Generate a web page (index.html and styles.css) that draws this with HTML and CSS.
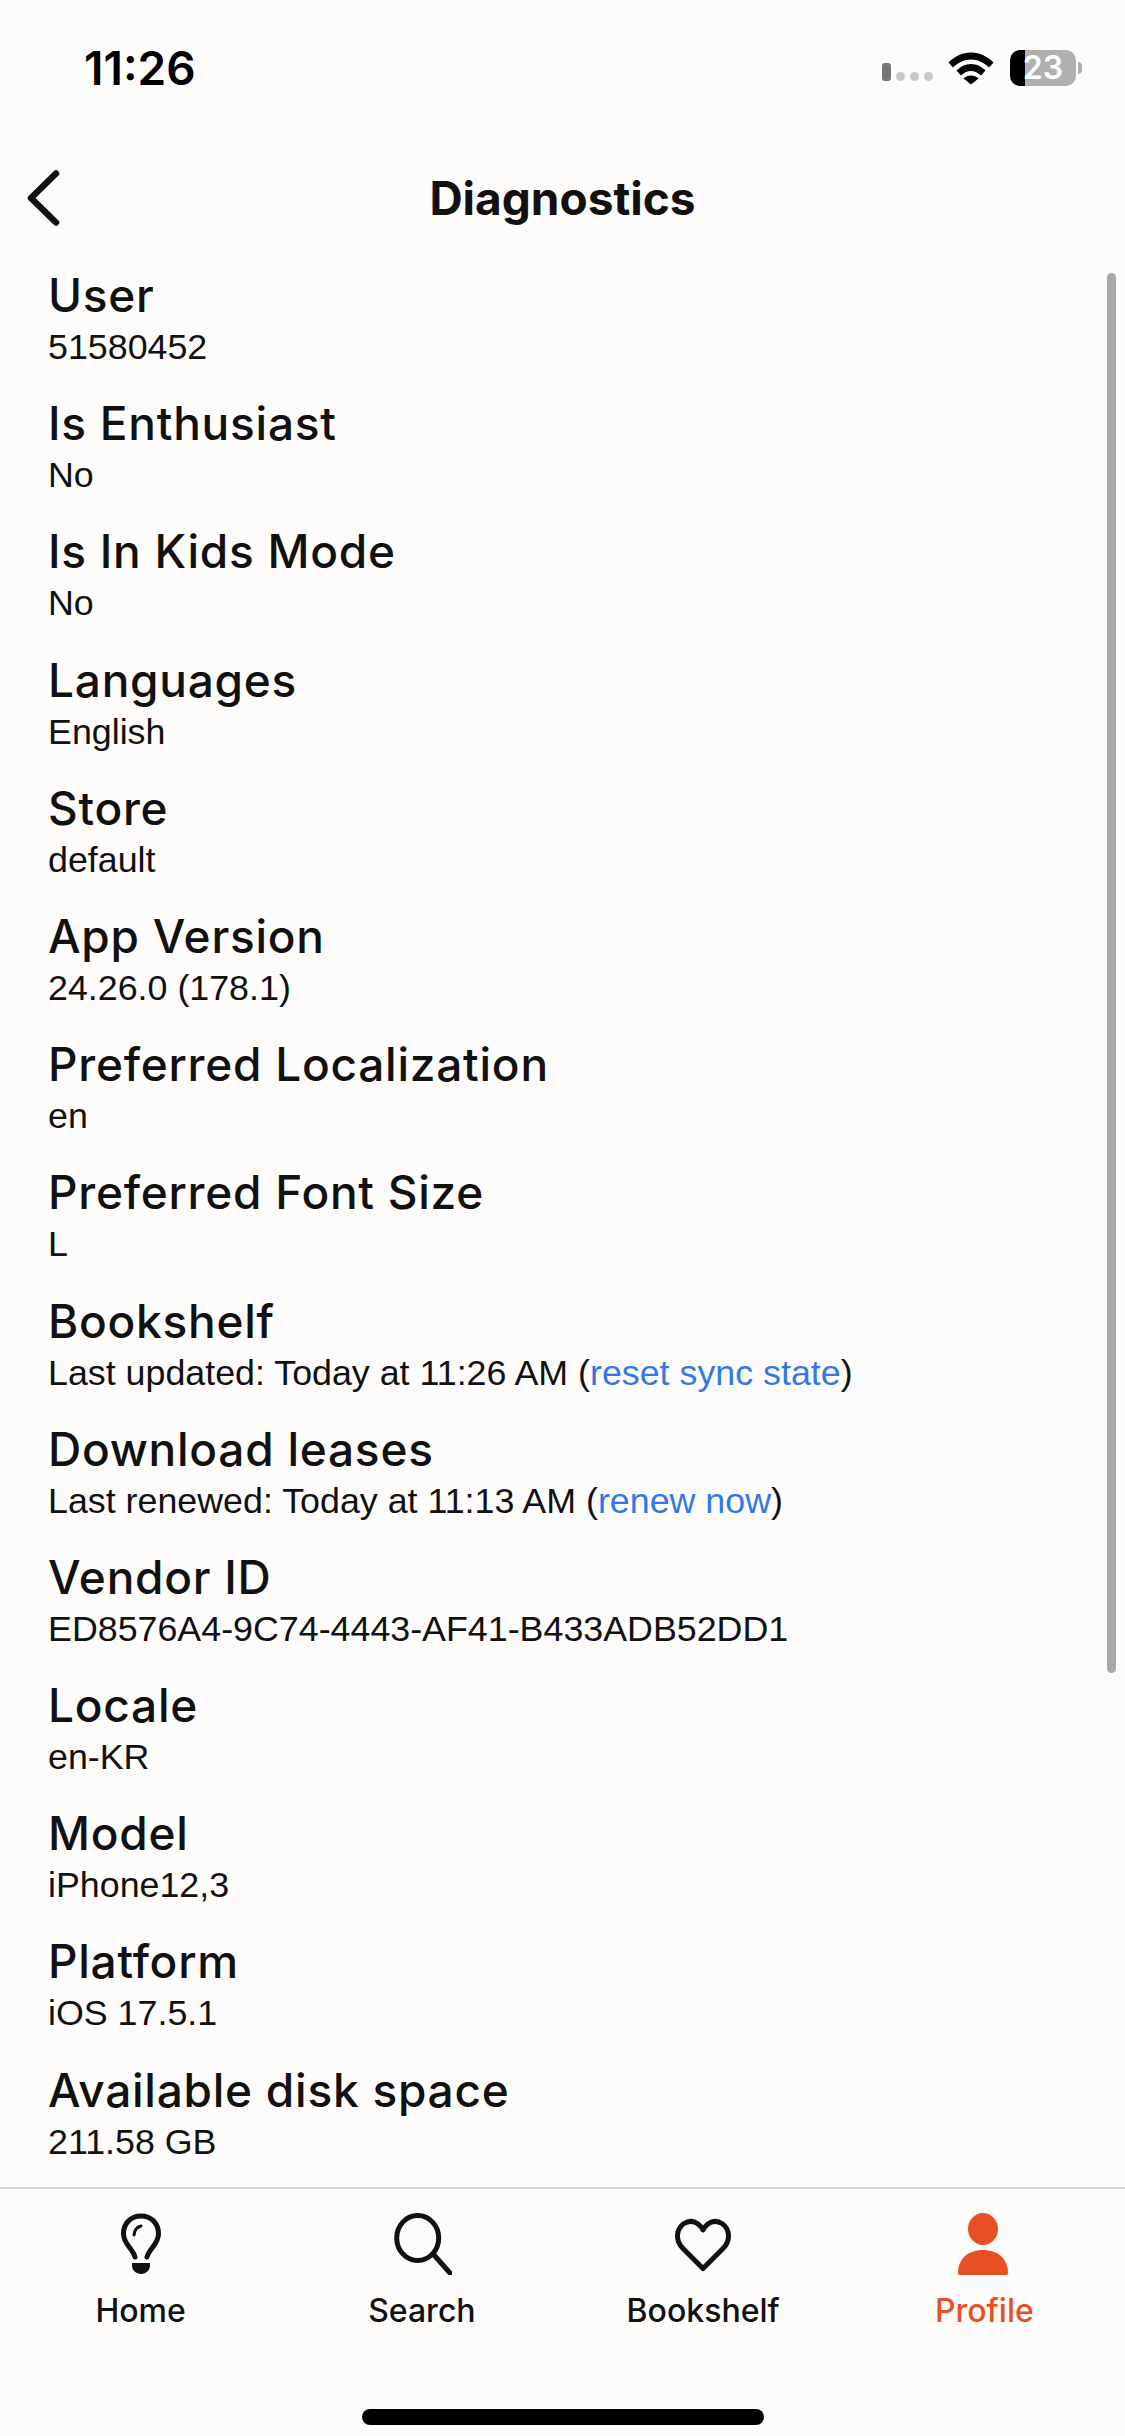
FILE: index.html
```html
<!DOCTYPE html>
<html>
  <head>
    <meta charset="utf-8">
    <title>Diagnostics</title>
    <link rel="stylesheet" href="styles.css">
  </head>
  <body>
    <div id="wrapper">
      <div class="status-bar">
        <span class="time">11:26</span>
        <div class="status-icons">
          <div class="signal"><i></i><i></i><i></i><i></i></div>
          <svg class="wifi" width="46" height="34" viewBox="0 0 46 34">
            <path d="M0.500 11.500C6.500 5.500 14.200 1.500 23 1.500s16.500 4 22.500 10L41 16.500C36.200 11.800 30 8.500 23 8.500S9.800 11.800 5 16.500Z"/>
            <path d="M8.500 19.500C12.300 15.800 17.300 13 23 13s10.700 2.800 14.500 6.500L33 24.500C30.200 22 26.800 20 23 20s-7.200 2-10 4.500Z"/>
            <path d="M15.500 27.500C17.500 25.800 20 24.500 23 24.500s5.500 1.300 7.500 3L23 33.500Z"/>
          </svg>
          <div class="battery">
            <div class="battery-body"><span>23</span></div>
            <div class="battery-tip"></div>
          </div>
        </div>
      </div>

      <div class="header">
        <svg class="back" width="34" height="56" viewBox="0 0 34 56">
          <path d="M30 3.500 5 28l25 24.500"/>
        </svg>
        <h1>Diagnostics</h1>
      </div>

      <div class="content">
        <div class="list">
          <div class="item"><h2>User</h2><p>51580452</p></div>
          <div class="item"><h2>Is Enthusiast</h2><p>No</p></div>
          <div class="item"><h2>Is In Kids Mode</h2><p>No</p></div>
          <div class="item"><h2>Languages</h2><p>English</p></div>
          <div class="item"><h2>Store</h2><p>default</p></div>
          <div class="item"><h2>App Version</h2><p>24.26.0 (178.1)</p></div>
          <div class="item"><h2>Preferred Localization</h2><p>en</p></div>
          <div class="item"><h2>Preferred Font Size</h2><p>L</p></div>
          <div class="item"><h2>Bookshelf</h2><p>Last updated: Today at 11:26 AM (<a href="#">reset sync state</a>)</p></div>
          <div class="item"><h2>Download leases</h2><p>Last renewed: Today at 11:13 AM (<a href="#">renew now</a>)</p></div>
          <div class="item"><h2>Vendor ID</h2><p>ED8576A4-9C74-4443-AF41-B433ADB52DD1</p></div>
          <div class="item"><h2>Locale</h2><p>en-KR</p></div>
          <div class="item"><h2>Model</h2><p>iPhone12,3</p></div>
          <div class="item"><h2>Platform</h2><p>iOS 17.5.1</p></div>
          <div class="item"><h2>Available disk space</h2><p>211.58 GB</p></div>
        </div>
        <div class="scrollbar"></div>
      </div>

      <div class="tabs">
        <div class="tab">
          <svg width="60" height="62" viewBox="0 0 60 62">
            <path class="line" d="M24 44C22 36 12.500 31 12.500 21 12.500 10 20 3 30 3s17.500 7 17.500 18C47.500 31 38 36 36 44"/>
            <path class="thin" d="M23 22C23.500 17 26 14 30 13"/>
            <path class="fill" d="M21 50h18v2c0 5.500-4 9-9 9s-9-3.500-9-9Z"/>
          </svg>
          <span>Home</span>
        </div>
        <div class="tab">
          <svg width="60" height="62" viewBox="0 0 60 62">
            <ellipse class="line" cx="25.700" cy="25" rx="21" ry="22.500"/>
            <path class="line" d="M42 42 58 60"/>
          </svg>
          <span>Search</span>
        </div>
        <div class="tab">
          <svg width="60" height="62" viewBox="0 0 60 62">
            <path class="line" d="M30 55.500 10 35.500C2 27.500 3 16 11 10.500 18 6 26 9 30 17 34 9 42 6 49 10.500 57 16 58 27.500 50 35.500Z"/>
          </svg>
          <span>Bookshelf</span>
        </div>
        <div class="tab active">
          <svg width="60" height="62" viewBox="0 0 60 62">
            <ellipse class="fill" cx="29" cy="16" rx="15" ry="16"/>
            <path class="fill" d="M6 62c-1.500 0-2-1-2-2 0-14 10-23 25-23s25 9 25 23c0 1-.5 2-2 2Z"/>
          </svg>
          <span>Profile</span>
        </div>
      </div>

      <div class="home-bar"><div></div></div>
    </div>
  </body>
</html>
```

FILE: styles.css
```css
* {
  box-sizing: border-box;
}
html, body {
  margin: 0;
  height: 100%;
}
body {
  background-color: #fdfcfb;
  color: #111;
  font-family: "Inter", "Liberation Sans", sans-serif;
}
#wrapper {
  display: flex;
  flex-direction: column;
  height: 2436px;
  overflow: hidden;
}

/* status bar */
.status-bar {
  display: flex;
  align-items: center;
  justify-content: space-between;
  height: 136px;
  padding: 0 43px 0 84px;
}
.time {
  font-size: 46px;
  font-weight: 600;
  color: #000;
}
.status-icons {
  display: flex;
  align-items: center;
}
.signal {
  display: flex;
  align-items: flex-end;
  gap: 5px;
  margin-right: 15px;
  margin-top: 8px;
}
.signal i {
  width: 9px;
  height: 9px;
  border-radius: 50%;
  background-color: #c8c8c8;
}
.signal i:first-child {
  height: 18px;
  border-radius: 3px;
  background-color: #777;
}
.wifi {
  fill: #000;
  margin-right: 16px;
}
.battery {
  display: flex;
  align-items: center;
}
.battery-body {
  width: 66px;
  height: 36px;
  border-radius: 10px;
  background: linear-gradient(90deg, #000 15px, #b1b0af 15px);
  color: #fff;
  font-size: 32px;
  font-weight: 600;
  line-height: 36px;
  text-align: center;
}
.battery-tip {
  width: 4px;
  height: 12px;
  margin-left: 2px;
  border-radius: 0 6px 6px 0;
  background-color: #b1b0af;
}

/* header */
.header {
  position: relative;
  display: flex;
  align-items: center;
  justify-content: center;
  height: 66px;
  margin-top: 29px;
}
.header h1 {
  margin: 0;
  font-size: 46px;
  font-weight: 700;
}
.back {
  position: absolute;
  left: 26px;
  top: 5px;
  fill: none;
  stroke: #111;
  stroke-width: 6.500;
  stroke-linecap: round;
  stroke-linejoin: round;
}

/* list */
.content {
  position: relative;
  flex: 1;
  min-height: 0;
  overflow: hidden;
  padding: 31px 0 0 48px;
}
.item {
  height: 128.2px;
}
.item h2 {
  margin: 0;
  height: 62px;
  font-size: 46px;
  font-weight: 500;
  letter-spacing: 0.75px;
  line-height: 67px;
}
.item p {
  margin: 0;
  height: 46px;
  font-family: "Liberation Sans", Arial, sans-serif;
  font-size: 35.800px;
  line-height: 47px;
}
.item a {
  color: #3478e5;
  text-decoration: none;
}
.scrollbar {
  position: absolute;
  top: 42px;
  right: 9px;
  width: 9px;
  height: 1400px;
  border-radius: 5px;
  background-color: #a9a9a9;
}

/* tab bar */
.tabs {
  display: grid;
  grid-template-columns: repeat(4, 1fr);
  height: 168px;
  border-top: 2px solid #d6d5d3;
  padding: 24px 0 0;
}
.tab {
  display: flex;
  flex-direction: column;
  align-items: center;
  font-size: 32px;
  font-weight: 500;
}
.tab svg {
  display: block;
  fill: none;
}
.tab span {
  margin-top: 16px;
}
.tab .line {
  fill: none;
  stroke: #111;
  stroke-width: 5;
  stroke-linecap: round;
  stroke-linejoin: round;
}
.tab .thin {
  fill: none;
  stroke: #111;
  stroke-width: 3;
  stroke-linecap: round;
}
.tab .fill {
  fill: #111;
}
.tab.active {
  color: #e94f24;
}
.tab.active .fill {
  fill: #e94f24;
}

/* home indicator */
.home-bar {
  display: flex;
  justify-content: center;
  height: 52px;
  padding-top: 25px;
  margin-top: 29px;
}
.home-bar div {
  width: 402px;
  height: 16px;
  border-radius: 8px;
  background-color: #000;
}
```
